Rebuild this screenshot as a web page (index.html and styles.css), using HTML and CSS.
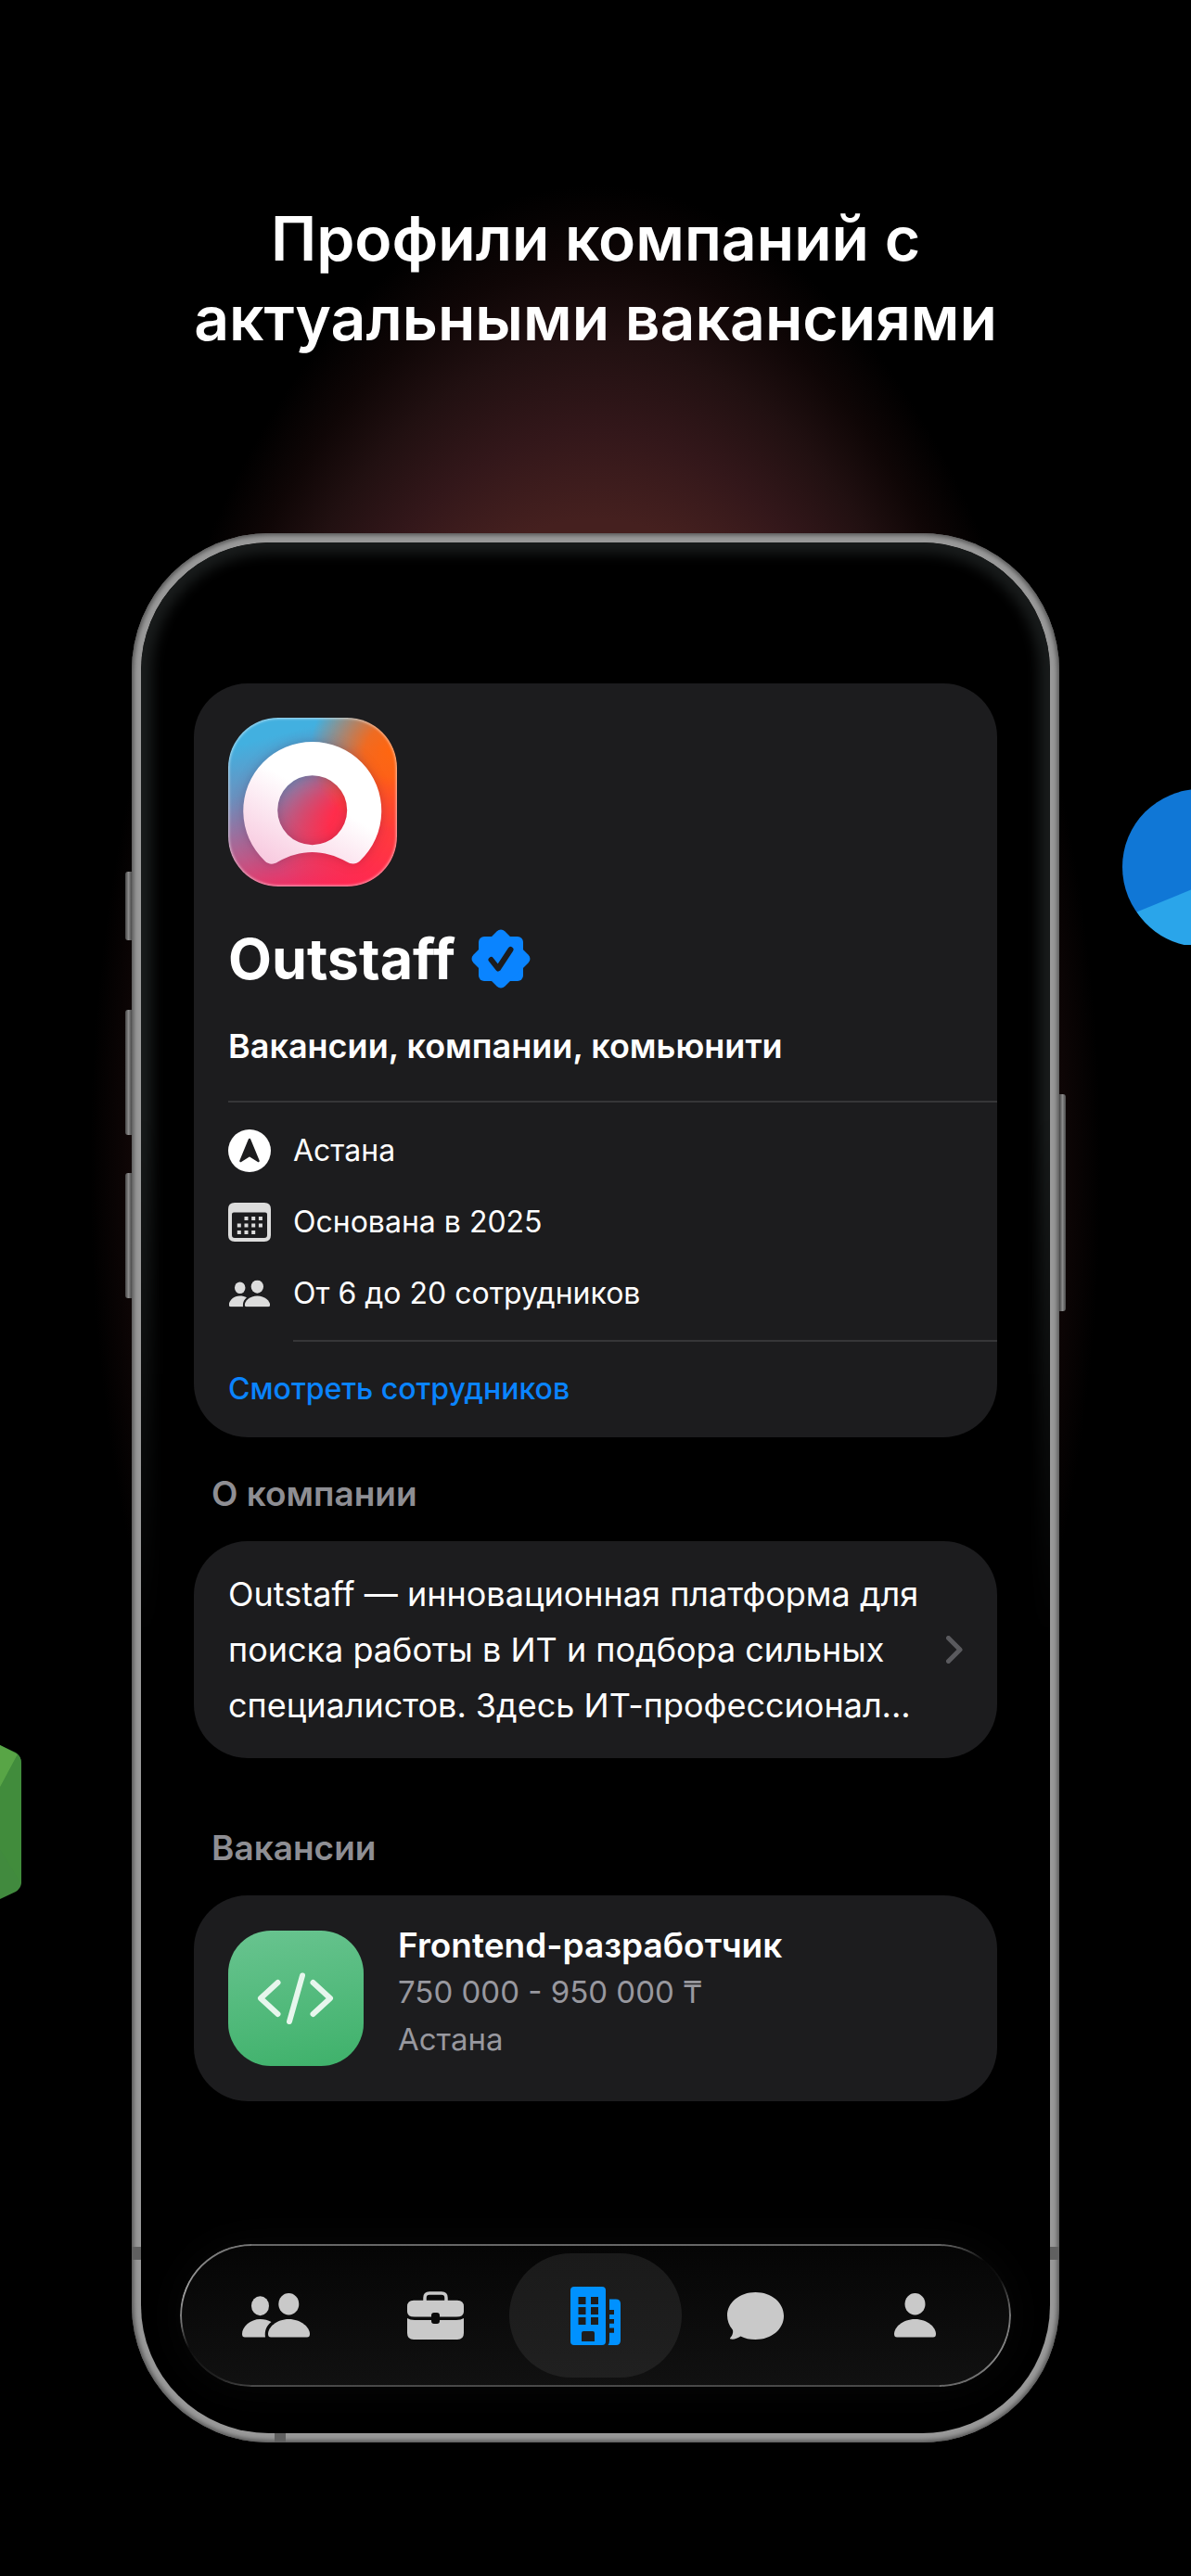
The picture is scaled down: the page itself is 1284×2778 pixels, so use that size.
FILE: index.html
```html
<!DOCTYPE html>
<html lang="ru">
<head>
    <meta charset="UTF-8">
    <meta name="viewport" content="width=device-width, initial-scale=1.0">
    <title>Outstaff</title>
    <link rel="stylesheet" href="styles.css">
</head>
<body>
    <!-- Shared icons -->
    <svg class="sprite" aria-hidden="true">
        <symbol id="people" viewBox="0 0 73 48">
            <ellipse cx="19.5" cy="13.7" rx="9.5" ry="10.5"/>
            <ellipse cx="50.3" cy="11.7" rx="11" ry="11.7"/>
            <path d="M3 47.5C1 47.5 0 46.5 0 44C0 36 9 28 19.5 28C24 28 28 29 31.5 31C26.5 35 24 40 25 47.5Z"/>
            <path d="M31 47.5C29 47.5 28 46.5 28 44C28 37 37 28 50.3 28C63.6 28 73 37 73 44C73 46.5 72 47.5 70 47.5Z"/>
        </symbol>
        <symbol id="person" viewBox="0 0 45 48">
            <ellipse cx="22.5" cy="11.7" rx="11" ry="11.7"/>
            <path d="M3 47.5C1 47.5 0 46.5 0 44C0 37 9 28 22.5 28C36 28 45 37 45 44C45 46.5 44 47.5 42 47.5Z"/>
        </symbol>
    </svg>

    <main class="page">
        <svg class="decor decor-circle" viewBox="0 0 168 168" aria-hidden="true">
            <circle cx="84" cy="84" r="84" fill="#1077d6"/>
            <path d="M15.5 132.5L168 70A84 84 0 0 1 15.5 132.5Z" fill="#2aa5ea"/>
        </svg>
        <svg class="decor decor-hexagon" viewBox="0 0 146 170" aria-hidden="true">
            <path d="M73 -18L123 0L140 8Q146 12 146 20V148Q146 154 140 158L78 187Q73 189 68 187L6 158Q0 154 0 148V20Q0 12 6 8Z" fill="#418a3e"/>
            <path d="M73 -18L123 0L142 10L104 81Z" fill="#58a546"/>
            <path d="M104 81L146 150V20Q146 13 142 10Z" fill="#418c3c"/>
        </svg>

        <h1 class="headline">Профили компаний с актуальными вакансиями</h1>

        <div class="phone">
            <span class="side-button action"></span>
            <span class="side-button volume-up"></span>
            <span class="side-button volume-down"></span>
            <span class="side-button power"></span>
            <span class="antenna antenna-left"></span>
            <span class="antenna antenna-right"></span>
            <span class="antenna antenna-bottom"></span>

            <div class="screen">
                <div class="content">
                    <section class="card company">
                        <div class="logo">
                            <svg viewBox="0 0 182 182" aria-hidden="true">
                                <defs>
                                    <linearGradient id="logoFill" x1="0.15" y1="0.95" x2="0.65" y2="0.2">
                                        <stop offset="0" stop-color="#f8cbe0"/>
                                        <stop offset="0.7" stop-color="#ffffff"/>
                                    </linearGradient>
                                </defs>
                                <path fill="url(#logoFill)" fill-rule="evenodd" d="M39.5 154.5A74.5 74.5 0 1 1 142 154.5C138 158.5 132 158 128 155.5C103 141.5 78 141.5 53.5 155.5C49 158.5 43.5 158.5 39.5 154.5ZM53.2 99.7A37.5 37.5 0 1 0 128.2 99.7A37.5 37.5 0 1 0 53.2 99.7Z"/>
                            </svg>
                        </div>
                        <div class="company-title">
                            <h2>Outstaff</h2>
                            <svg class="verified" viewBox="0 0 64 64" role="img" aria-label="Проверено">
                                <rect x="8" y="8" width="48" height="48" rx="6"/>
                                <rect x="8" y="8" width="48" height="48" rx="6" transform="rotate(45 32 32)"/>
                                <path d="M21.5 33L29 42.5L42.5 22"/>
                            </svg>
                        </div>
                        <p class="tagline">Вакансии, компании, комьюнити</p>
                        <ul class="facts">
                            <li>
                                <svg class="fact-icon" viewBox="0 0 46 46" aria-hidden="true">
                                    <circle cx="23" cy="23" r="23" fill="#fff"/>
                                    <path d="M23 11L32.5 34L23 28L13.5 34Z" fill="#1c1c1e" stroke="#1c1c1e" stroke-width="2.5" stroke-linejoin="round"/>
                                </svg>
                                Астана
                            </li>
                            <li>
                                <svg class="fact-icon" viewBox="0 0 46 46" aria-hidden="true" fill="#dcdcdc">
                                    <path fill-rule="evenodd" d="M7 2H39Q46 2 46 9V37Q46 44 39 44H7Q0 44 0 37V9Q0 2 7 2ZM6 12.5Q4 12.5 4 14.5V37Q4 40 7 40H39Q42 40 42 37V14.5Q42 12.5 40 12.5Z"/>
                                    <path fill="none" stroke="#dcdcdc" stroke-width="4" stroke-dasharray="4 3.7" d="M17.5 19H37M9.8 26.5H37M9.8 34H30"/>
                                </svg>
                                Основана в 2025
                            </li>
                            <li>
                                <svg class="fact-icon" viewBox="-1.5 0 76 48" aria-hidden="true" fill="#dcdcdc"><use href="#people" width="73" height="48"/></svg>
                                От 6 до 20 сотрудников
                            </li>
                        </ul>
                        <a class="staff-link" href="#">Смотреть сотрудников</a>
                    </section>

                    <h3>О компании</h3>
                    <a class="card about" href="#">
                        <p>Outstaff — инновационная платформа для поиска работы в ИТ и подбора сильных специалистов. Здесь ИТ-профессионал...</p>
                        <svg class="chevron" viewBox="0 0 18 30" aria-hidden="true"><path d="M2.5 2.5L15 15L2.5 27.5"/></svg>
                    </a>

                    <h3 class="jobs-heading">Вакансии</h3>
                    <a class="card job" href="#">
                        <span class="job-icon">
                            <svg viewBox="0 0 146 146" aria-hidden="true"><path d="M53.5 56L35 73L53.5 90M91.5 56L110 73L91.5 90M80 48.5L66 98"/></svg>
                        </span>
                        <span class="job-info">
                            <strong>Frontend-разработчик</strong>
                            <span>750 000 - 950 000 ₸</span>
                            <span>Астана</span>
                        </span>
                    </a>
                </div>

                <nav class="tabs">
                    <a href="#" aria-label="Люди"><svg width="73" height="48"><use href="#people"/></svg></a>
                    <a href="#" aria-label="Работа">
                        <svg width="61" height="52" viewBox="0 0 61 52">
                            <path fill="none" stroke="#c9c9c9" stroke-width="3.5" d="M19 11V7Q19 2 24 2H37Q42 2 42 7V11"/>
                            <path d="M7 9.7H54Q61 9.7 61 16.5V22Q61 27.5 53 27.5H35V26Q35 23 32 23H29Q26 23 26 26V27.5H8Q0 27.5 0 22V16.5Q0 9.7 7 9.7Z"/>
                            <path d="M0 29Q3 31 8 31H26V32Q26 35 29 35H32Q35 35 35 32V31H53Q58 31 61 29V45Q61 52 54 52H7Q0 52 0 45Z"/>
                        </svg>
                    </a>
                    <a class="active" href="#" aria-label="Компании" aria-current="page">
                        <svg width="54" height="63" viewBox="0 0 54 63">
                            <path fill-rule="evenodd" d="M4 0H34Q38 0 38 4V59Q38 63 34 63H4Q0 63 0 59V4Q0 0 4 0ZM8.5 11V19H16.5V11ZM22 11V19H30V11ZM8.5 22V30H16.5V22ZM22 22V30H30V22ZM8.5 33V41H16.5V33ZM22 33V41H30V33ZM14 48Q12 48 12 50V59H26V50Q26 48 24 48Z"/>
                            <path d="M42 13.5H49Q54 13.5 54 18.5V58Q54 63 49 63H40.5Q42 61 42 58V49.7H47V44.5H42V39.7H47V35H42V30H47V25H42Z"/>
                        </svg>
                    </a>
                    <a href="#" aria-label="Чаты">
                        <svg width="61" height="51" viewBox="0 0 61 51">
                            <path d="M14.5 47.5C11 50 7 51 4 50.5C2.5 50.2 2.8 49.5 3.8 48.5C6 46 7 42 5.5 40C2 36 0 30.5 0 25C0 11 13.5 0 30.5 0S61 11 61 25.500S47.5 51 30.5 51C24.5 51 19 50 14.5 47.5Z"/>
                        </svg>
                    </a>
                    <a href="#" aria-label="Профиль"><svg width="45" height="48"><use href="#person"/></svg></a>
                </nav>
            </div>
        </div>
    </main>
</body>
</html>
```
FILE: styles.css
```css
* {
    box-sizing: border-box;
}
body {
    margin: 0;
    background-color: #000;
    color: #fff;
    font-family: Inter, "Noto Sans", sans-serif;
}
h1, h2, h3, p, ul {
    margin: 0;
    padding: 0;
}
a {
    color: inherit;
    text-decoration: none;
}
.sprite {
    position: absolute;
    width: 0;
    height: 0;
}
.page {
    position: relative;
    display: flex;
    flex-direction: column;
    align-items: center;
    min-height: 100vh;
    padding: 214px 142px 144px;
    overflow: hidden;
    background: radial-gradient(ellipse 545px 1060px at 50% 1260px, #46211f 0%, #45201f 66%, #33171a 75%, #211011 84%, #0f0606 92%, #000 100%);
}
.headline {
    max-width: 960px;
    font-size: 66px;
    line-height: 86px;
    font-weight: 600;
    text-align: center;
}

/* Background shapes */
.decor {
    position: absolute;
}
.decor-circle {
    top: 851px;
    right: -94px;
    width: 168px;
}
.decor-hexagon {
    top: 1882px;
    left: -123px;
    width: 146px;
    overflow: visible;
}

/* Phone body */
.phone {
    position: relative;
    width: 100%;
    max-width: 1000px;
    margin-top: 189px;
    padding: 10px;
    border-radius: 148px;
    background-color: #999;
    box-shadow: inset 0 0 5px 2px #505050;
}
.side-button {
    position: absolute;
    left: -7px;
    width: 7px;
    border-radius: 3px 0 0 3px;
    background: linear-gradient(90deg, #444, #8a8a8a 50%, #4a4a4a);
}
.action {
    top: 365px;
    height: 74px;
}
.volume-up {
    top: 514px;
    height: 135px;
}
.volume-down {
    top: 690px;
    height: 135px;
}
.power {
    top: 605px;
    left: auto;
    right: -7px;
    height: 234px;
    border-radius: 0 3px 3px 0;
}
.antenna {
    position: absolute;
    background-color: #606060;
}
.antenna-left, .antenna-right {
    bottom: 197px;
    width: 10px;
    height: 14px;
}
.antenna-left {
    left: 0;
}
.antenna-right {
    right: 0;
}
.antenna-bottom {
    left: 154px;
    bottom: 0;
    width: 12px;
    height: 10px;
}
.screen {
    position: relative;
    padding: 152px 42px 50px;
    border-radius: 138px;
    background-color: #000;
}
.screen::before {
    content: "";
    position: absolute;
    inset: 0;
    border-radius: inherit;
    box-shadow: inset 0 0 14px 12px #191c1c;
    mask-image: linear-gradient(#000 30%, transparent 58%);
    pointer-events: none;
}
.content {
    padding: 0 15px;
}
.card {
    border-radius: 58px;
    background-color: #1c1c1e;
}

/* Company card */
.company {
    padding: 37px 0 0 37px;
}
.logo {
    width: 182px;
    height: 182px;
    border-radius: 54px;
    background:
        radial-gradient(circle at 96% 20%, #ff6610 0%, rgba(255, 102, 16, 0.9) 12%, rgba(255, 102, 16, 0) 38%),
        radial-gradient(ellipse at 110% 65%, #ff3f38 0%, #ff2d4c 32%, rgba(255, 35, 88, 0) 58%),
        linear-gradient(165deg, #42b0e0 14%, #6a91bf 38%, #b75d8c 66%, #ff2358 92%);
    box-shadow: inset 0 0 3px 1px rgba(255, 255, 255, 0.6);
}
.logo svg {
    display: block;
    filter: drop-shadow(0 0 6px rgba(60, 20, 60, 0.25));
}
.company-title {
    display: flex;
    align-items: center;
    gap: 17px;
    margin-top: 40px;
}
h2 {
    font-size: 61px;
    line-height: 76px;
    font-weight: 700;
}
.verified {
    width: 64px;
    height: 64px;
    fill: #0a84ff;
}
.verified path {
    fill: none;
    stroke: #1c1c1e;
    stroke-width: 6;
    stroke-linecap: round;
    stroke-linejoin: round;
}
.tagline {
    margin-top: 32px;
    font-size: 36px;
    line-height: 48px;
    font-weight: 600;
}
.facts {
    margin-top: 35px;
    padding: 13px 0;
    border-top: 2px solid #363638;
    list-style: none;
    font-size: 32px;
}
.facts li {
    display: flex;
    align-items: center;
    gap: 24px;
    height: 77px;
}
.fact-icon {
    flex: none;
    width: 46px;
    height: 46px;
}
.staff-link {
    position: relative;
    display: block;
    padding: 30px 0;
    color: #0a84ff;
    font-size: 32px;
    line-height: 44px;
    font-weight: 500;
}
.staff-link::before {
    content: "";
    position: absolute;
    top: -1px;
    left: 70px;
    right: 0;
    height: 2px;
    background-color: #363638;
}
h3 {
    padding: 38px 19px 28px;
    color: #8e8e93;
    font-size: 37px;
    line-height: 46px;
    font-weight: 600;
}

/* About */
.about {
    display: flex;
    align-items: center;
    justify-content: space-between;
    padding: 27px 37px;
    font-size: 36px;
    line-height: 60px;
}
.about p {
    max-width: 750px;
}
.chevron {
    flex: none;
    width: 18px;
    height: 30px;
    fill: none;
    stroke: #5a5a5e;
    stroke-width: 5;
    stroke-linecap: round;
    stroke-linejoin: round;
}

/* Jobs */
.jobs-heading {
    padding-top: 74px;
}
.job {
    display: flex;
    align-items: flex-start;
    gap: 37px;
    padding: 0 37px;
}
.job-icon {
    flex: none;
    width: 146px;
    height: 146px;
    margin: 38px 0;
    border-radius: 46px;
    background: linear-gradient(170deg, #69c490, #3eb16a);
}
.job-icon svg {
    display: block;
    fill: none;
    stroke: #e7f6ed;
    stroke-width: 6;
    stroke-linecap: round;
    stroke-linejoin: round;
}
.job-info {
    display: flex;
    flex-direction: column;
    padding-top: 28px;
    color: #98989f;
    font-size: 33px;
    line-height: 51px;
}
.job-info strong {
    color: #fff;
    font-size: 37px;
    font-weight: 600;
}

/* Tab bar */
.tabs {
    position: relative;
    display: grid;
    grid-template-columns: repeat(5, 1fr);
    margin-top: 154px;
    padding: 10px 17px;
    border-radius: 77px;
    background: linear-gradient(#050505, #111);
    box-shadow: 0 0 50px rgba(255, 255, 255, 0.03);
}
/* Glass edge, lit from the top left and the bottom right */
.tabs::before {
    content: "";
    position: absolute;
    inset: 0;
    padding: 2px;
    border-radius: inherit;
    background:
        linear-gradient(170deg, #666, #a0a0a0 30%, #777 50%, transparent 68%, #222 90%, #444) left / 77px 100% no-repeat,
        linear-gradient(170deg, #666, transparent 16%, #111 30%, #777 52%, #888 80%, #555) right / 77px 100% no-repeat,
        linear-gradient(#666, #484848) center / calc(100% - 154px) 100% no-repeat;
    mask: linear-gradient(#000 0 0) content-box exclude, linear-gradient(#000 0 0);
    pointer-events: none;
}
.tabs a {
    display: flex;
    align-items: center;
    justify-content: center;
    height: 134px;
    fill: #c9c9c9;
}
.tabs .active {
    margin: 0 -7px;
    border-radius: 67px;
    background: linear-gradient(#1a1a1a, #202020);
    fill: #0091ff;
}
```
